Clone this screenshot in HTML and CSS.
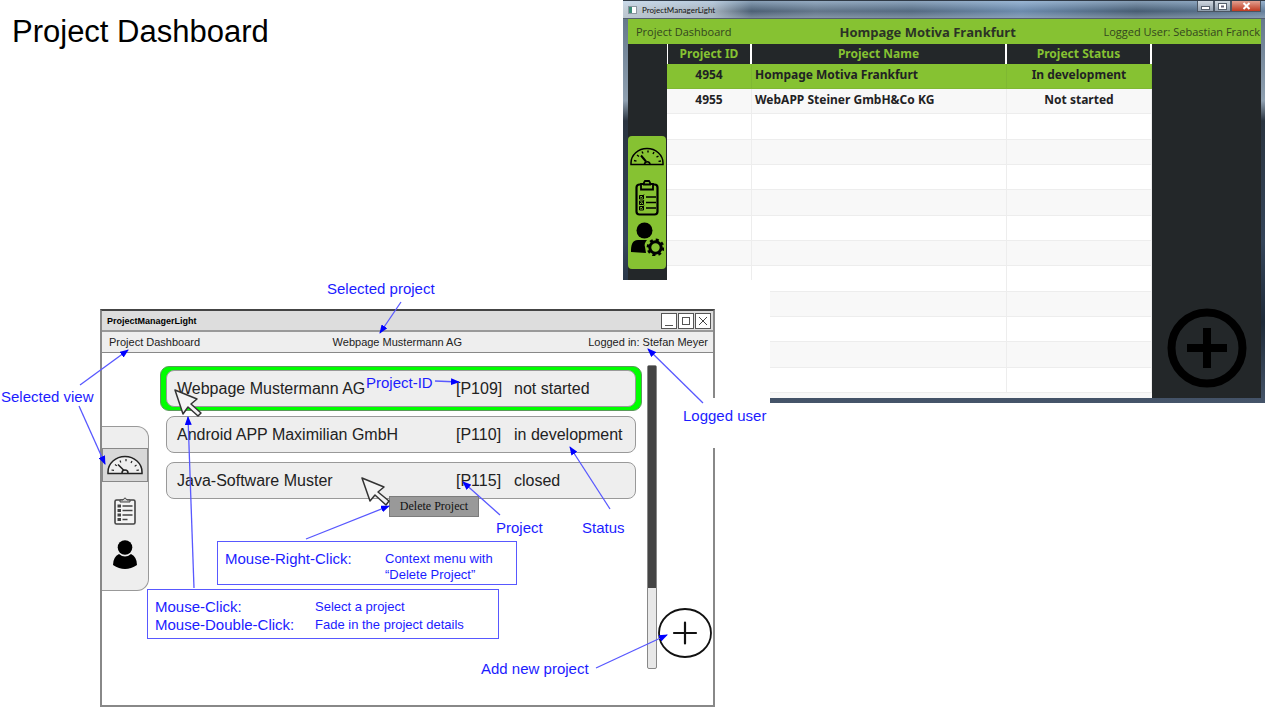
FILE: index.html
```html
<!DOCTYPE html>
<html lang="en">
<head>
<meta charset="utf-8">
<title>Project Dashboard</title>
<link rel="stylesheet" href="styles.css">
</head>
<body>
<main class="slide">
  <h1 class="slide-title">Project Dashboard</h1>

  <section class="app" aria-label="Application">
    <header class="app-titlebar">
      <span class="app-icon"></span>
      <span class="app-name">ProjectManagerLight</span>
      <div class="win-controls">
        <button class="win-btn" aria-label="Minimize"><svg width="9" height="7" viewBox="0 0 9 7"><rect x="0.5" y="3.5" width="8" height="3" fill="#fff" stroke="#56606c"/></svg></button>
        <button class="win-btn" aria-label="Maximize"><svg width="9" height="7" viewBox="0 0 9 7"><rect x="0.5" y="0.5" width="8" height="6" fill="#fff" stroke="#56606c"/><rect x="3" y="2.5" width="3" height="2" fill="#667"/></svg></button>
        <button class="win-btn win-close" aria-label="Close"><svg width="9" height="8" viewBox="0 0 9 8"><path d="M1.5 1l6 6M7.5 1l-6 6" stroke="#fff" stroke-width="2"/></svg></button>
      </div>
    </header>
    <div class="app-bar">
      <span class="app-view">Project Dashboard</span>
      <strong class="app-project">Hompage Motiva Frankfurt</strong>
      <span class="app-user">Logged User: Sebastian Franck</span>
    </div>
    <div class="app-main">
      <div class="app-side">
        <nav class="app-nav" aria-label="Views">
          <button class="nav-btn" aria-label="Dashboard">
            <svg width="34" height="19" viewBox="0 0 34 19"><path d="M1 17.500V16a16 14.500 0 0 1 32 0v1.500z" fill="none" stroke="#000" stroke-width="1.500"/><path d="M4 13.500l2.500.6M7 8l2 1.500M12 4.500l1 2M18 3.500v2M24 5l-1 2M28.500 9l-2 1.200M31 14l-2.500.4" stroke="#000" stroke-width="1.400"/><path d="M11 8.500l5 6" stroke="#000" stroke-width="2"/><path d="M14.500 17a2.800 2.800 0 0 1 5.500 0" fill="none" stroke="#000" stroke-width="1.700"/></svg>
          </button>
          <button class="nav-btn" aria-label="Tasks">
            <svg width="24" height="36" viewBox="0 0 24 36"><rect x="1.500" y="4.500" width="21" height="30" rx="3" fill="none" stroke="#000" stroke-width="2.200"/><path d="M6 4h3V2.500L10 1h4l1 1.500V4h3v5.500H6z" fill="#86c232" stroke="#000" stroke-width="1.800"/><path d="M8 3.500h8v2H8z" fill="#000"/><path d="M11 17h10M11 22.500h10M11 28h10" stroke="#000" stroke-width="1.300"/><path d="M4.500 15.500h4v3.500h-4zM4.500 21h4v3.500h-4zM4.500 26.500h4V30h-4z" fill="none" stroke="#000"/><path d="M5 16.500l1.500 1.500L9 14.500M5 22l1.500 1.500L9 20M5 27.500L6.500 29 9 25.500" fill="none" stroke="#000"/></svg>
          </button>
          <button class="nav-btn" aria-label="User settings">
            <svg width="34" height="34" viewBox="0 0 34 34"><circle cx="14.500" cy="8.500" r="8" /><path d="M1 30c0-7 1-12 7-12h9c-2 2-3 5-2 7l1 6z"/><g transform="translate(25.500 25.500)"><circle r="5.700" fill="none" stroke="#000" stroke-width="3"/><circle r="7.600" fill="none" stroke="#000" stroke-width="2.600" stroke-dasharray="3 2.970"/></g></svg>
          </button>
        </nav>
      </div>
      <div class="table-wrap">
        <table class="projects">
          <colgroup><col class="col-id"><col class="col-name"><col class="col-status"></colgroup>
          <thead><tr><th scope="col">Project ID</th><th scope="col">Project Name</th><th scope="col">Project Status</th></tr></thead>
          <tbody>
            <tr class="is-selected"><td>4954</td><td>Hompage Motiva Frankfurt</td><td>In development</td></tr>
            <tr><td>4955</td><td>WebAPP Steiner GmbH&amp;Co KG</td><td>Not started</td></tr>
            <tr><td></td><td></td><td></td></tr>
            <tr><td></td><td></td><td></td></tr>
            <tr><td></td><td></td><td></td></tr>
            <tr><td></td><td></td><td></td></tr>
            <tr><td></td><td></td><td></td></tr>
            <tr><td></td><td></td><td></td></tr>
            <tr><td></td><td></td><td></td></tr>
            <tr><td></td><td></td><td></td></tr>
            <tr><td></td><td></td><td></td></tr>
            <tr><td></td><td></td><td></td></tr>
            <tr><td></td><td></td><td></td></tr>
          </tbody>
        </table>
      </div>
      <div class="app-actions">
        <button class="app-add" aria-label="Add project">
          <svg width="80" height="80" viewBox="0 0 80 80"><circle cx="40" cy="40" r="35.500" fill="none" stroke="#000" stroke-width="8"/><path d="M20 40h40M40 20v40" stroke="#000" stroke-width="8"/></svg>
        </button>
      </div>
    </div>
  </section>

  <section class="sketch" aria-label="Annotated wireframe">
    <div class="mock">
      <header class="mock-titlebar">
        <span class="mock-name">ProjectManagerLight</span>
        <div class="mock-controls">
          <button class="mock-btn" aria-label="Minimize"><svg width="14" height="14" viewBox="0 0 14 14"><path d="M3 11.500h8" stroke="#555"/></svg></button>
          <button class="mock-btn" aria-label="Maximize"><svg width="14" height="14" viewBox="0 0 14 14"><rect x="3.500" y="3.500" width="7" height="7" fill="none" stroke="#555"/></svg></button>
          <button class="mock-btn" aria-label="Close"><svg width="14" height="14" viewBox="0 0 14 14"><path d="M3 3l8 8M11 3l-8 8" stroke="#444"/></svg></button>
        </div>
      </header>
      <div class="mock-bar">
        <span>Project Dashboard</span>
        <span>Webpage Mustermann AG</span>
        <span class="mock-user">Logged in: Stefan Meyer</span>
      </div>
      <div class="mock-main">
        <nav class="mock-nav" aria-label="Wireframe views">
          <button class="mock-view is-active" aria-label="Dashboard">
            <svg width="36" height="20" viewBox="0 0 36 20"><path d="M1 18.500V17a17 15.500 0 0 1 34 0v1.500z" fill="#eee" stroke="#222" stroke-width="1.500"/><path d="M4.500 15l2.500.4M8 9.500l1.800 1.400M13 5.500l.8 2M19 4v2.200M25 6l-1 2M29.500 10l-1.800 1.400M32 15l-2.500.4" stroke="#222" stroke-width="1.200"/><path d="M11 9.500l6 6" stroke="#222" stroke-width="1.600"/><path d="M15 18a3 3 0 0 1 6 0" fill="none" stroke="#222" stroke-width="1.500"/></svg>
          </button>
          <button class="mock-view" aria-label="Tasks">
            <svg width="22" height="28" viewBox="0 0 22 28"><rect x="1" y="3" width="20" height="24" rx="1.500" fill="#f4f4f4" stroke="#444" stroke-width="1.600"/><path d="M6 5V3h3q2-4 4 0h3v2z" fill="#ccc" stroke="#444"/><path d="M8.500 9h10M8.500 13.500h10M8.500 18h10M8.500 22.500h5" stroke="#444" stroke-width="1.400"/><path d="M3.500 9H7M3.500 13.500H7M3.500 18H7M3.500 22.500H7" stroke="#444" stroke-width="2.800"/></svg>
          </button>
          <button class="mock-view" aria-label="User">
            <svg width="24" height="29" viewBox="0 0 24 29"><circle cx="12" cy="7.500" r="7.300"/><path d="M6 14q6 5 12 0 6 3 6 11-12 8-24 0 0-8 6-11z"/></svg>
          </button>
        </nav>
        <ul class="mock-list">
          <li class="mock-item is-selected"><button class="mock-card"><span>Webpage Mustermann AG</span><span>[P109]</span><span>not started</span></button></li>
          <li class="mock-item"><button class="mock-card"><span>Android APP Maximilian GmbH</span><span>[P110]</span><span>in development</span></button></li>
          <li class="mock-item"><button class="mock-card"><span>Java-Software Muster</span><span>[P115]</span><span>closed</span></button></li>
        </ul>
        <div class="mock-scroll"><div class="mock-thumb"></div></div>
        <button class="mock-add" aria-label="Add new project">
          <svg width="54" height="50" viewBox="0 0 54 50"><ellipse cx="27" cy="25" rx="26" ry="24" fill="#fff" stroke="#111" stroke-width="1.800"/><path d="M16 25h22M27 14.500v21" stroke="#111" stroke-width="2.200" stroke-linecap="round"/></svg>
        </button>
      </div>
    </div>

    <button class="context-menu">Delete Project</button>

    <dl class="note note-right-click">
      <dt>Mouse-Right-Click:</dt><dd>Context menu with<br>“Delete Project”</dd>
    </dl>
    <dl class="note note-click">
      <dt>Mouse-Click:</dt><dd>Select a project</dd>
      <dt>Mouse-Double-Click:</dt><dd>Fade in the project details</dd>
    </dl>

    <span class="label label-project">Selected project</span>
    <span class="label label-view">Selected view</span>
    <span class="label label-id">Project-ID</span>
    <span class="label label-user">Logged user</span>
    <span class="label label-item">Project</span>
    <span class="label label-status">Status</span>
    <span class="label label-add">Add new project</span>

    <svg class="arrows" width="770" height="430" viewBox="0 280 770 430" aria-hidden="true">
      <defs>
        <marker id="head" markerUnits="userSpaceOnUse" markerWidth="9" markerHeight="7" refX="8" refY="3.500" orient="auto"><path d="M0 0l9 3.500L0 7z" fill="#00f"/></marker>
      </defs>
      <g fill="#f4f4f4" stroke="#333" stroke-width="1.500" stroke-linejoin="round">
        <path d="M175 390l22 9-6 5 10 9-3 3-10-9-5 7z"/>
        <path d="M362 478l22 9-6 5 11 9-3 4-11-10-5 6z"/>
      </g>
      <g stroke="#5858ff" stroke-width="1.300">
        <path marker-end="url(#head)" d="M401 302L380 333"/>
        <path marker-end="url(#head)" d="M80 385L128 350"/>
        <path marker-end="url(#head)" d="M79 406L105 464"/>
        <path marker-end="url(#head)" d="M435 381L459 382"/>
        <path marker-end="url(#head)" d="M703 403L648 349"/>
        <path marker-end="url(#head)" d="M194 588L188 417"/>
        <path marker-end="url(#head)" d="M306 539L389 506"/>
        <path marker-end="url(#head)" d="M500 515L463 482"/>
        <path marker-end="url(#head)" d="M610 509L570 447"/>
        <path marker-end="url(#head)" d="M596 668L667 635"/>
      </g>
    </svg>
  </section>
</main>
</body>
</html>
```
FILE: styles.css
```css
* { box-sizing: border-box; }
body { margin: 0; background: #fff; font-family: "Liberation Sans", Arial, sans-serif; color: #000; }
button { margin: 0; padding: 0; border: 0; background: none; font: inherit; color: inherit; cursor: pointer; }
svg { display: block; }

.slide { position: relative; min-height: 710px; overflow: hidden; }
.slide-title { margin: 0; padding: 14px 12px; font-size: 31px; line-height: 36px; font-weight: 400; }

/* Application window */
.app {
  position: absolute; top: 0; left: 623px; right: 0;
  padding: 0 4px 5px 5px;
  font-family: "Noto Sans", "Open Sans", sans-serif;
  background: linear-gradient(#5c6f84, #8fa0b0 25%, #2a3440 30%, #35455a 60%, #1e2a38 80%, #46556a);
}
.app-titlebar {
  display: flex; align-items: center; gap: 5px; height: 19px; margin: 0 -4px 0 -5px; padding-left: 5px;
  border-top: 1px solid #303a46; border-bottom: 1px solid #55606c;
  background: linear-gradient(rgba(190,215,240,.5), rgba(30,45,65,.1) 60%, rgba(160,175,190,.5)),
    linear-gradient(90deg, #d5dde4, #b4c0cb 14%, #52667a 20%, #6b7e92 30%, #5b7188 45%, #7595b8 62%, #4c6278 80%, #6d89a6);
}
.app-icon { width: 9px; height: 8px; border: 1px solid #8a959f; background: linear-gradient(90deg, #3c8c78 40%, #fff 40%); }
.app-name { flex: 1; font-family: Lato, "Noto Sans", sans-serif; font-size: 8px; line-height: 12px; color: #111; }
.win-controls { display: flex; align-self: flex-start; margin-right: 4px; }
.win-btn { display: grid; place-items: center; width: 17px; height: 11px; border: 1px solid #4a5562; border-top: 0; background: linear-gradient(#d0d8e0, #8f9dac); }
.win-close { width: 30px; background: linear-gradient(#e2a090, #c03a20); }
.app-bar {
  display: grid; grid-template-columns: 10fr auto 12fr; align-items: center; height: 25px; padding: 0 1px 0 8px;
  background: #86c232; color: #33461e; font-family: "Open Sans", "Noto Sans", sans-serif; font-size: 11px;
}
.app-project { font-size: 13px; color: #2b3326; }
.app-user { justify-self: end; }
.app-main { display: flex; height: 354px; background: #232729; }
.app-side { width: 39px; padding-top: 92px; }
.app-nav { display: flex; flex-direction: column; align-items: center; width: 38px; padding: 11px 0 13px; border-radius: 4px; background: #86c232; }
.nav-btn + .nav-btn { margin-top: 14px; }
.nav-btn:last-child { margin-top: 6px; }

.table-wrap { flex: 1; background: #f8f8f8; }
.projects { width: 100%; table-layout: fixed; border-collapse: separate; border-spacing: 0; font-size: 12px; line-height: 16px; font-weight: 700; color: #1f2224; }
.col-id { width: 85px; }
.col-status { width: 145px; }
.projects th { height: 20px; padding: 0; background: #232729; color: #86c232; border-right: 2px solid #fff; }
.projects th:first-child { border-left: 1px solid #fff; }
.projects td { height: 25px; padding: 0 0 2px; text-align: center; background: #fff; border-right: 1px solid #ededed; border-bottom: 1px solid #ededed; }
.projects tr:nth-child(3n) td { height: 26px; }
.projects td:nth-child(2) { padding-left: 3px; text-align: left; }
.projects tr:nth-child(even) td { background: #f8f8f8; }
.projects .is-selected td { background: #86c232; border-color: #7fb832; }
.app-actions { display: flex; align-items: flex-end; justify-content: center; width: 109px; padding-bottom: 10px; }

/* Wireframe */
.sketch { position: absolute; top: 280px; left: 0; width: 770px; height: 430px; background: #fff; }
.mock { position: absolute; top: 29px; left: 100px; width: 615px; border: 2px solid #888; border-top-color: #444; background: #fff; }
.mock-titlebar { display: flex; align-items: center; justify-content: space-between; height: 21px; padding: 0 2px 0 5px; border-bottom: 2px solid #999; background: #ddd; }
.mock-name { font-size: 9px; font-weight: 700; }
.mock-controls { display: flex; gap: 1px; }
.mock-btn { width: 16px; height: 16px; border: 1px solid #555; background: #fff; }
.mock-bar { display: grid; grid-template-columns: 10fr auto 11fr; align-items: center; height: 21px; padding: 0 5px 0 7px; border-bottom: 1px solid #888; background: #eee; font-size: 11px; color: #222; }
.mock-user { justify-self: end; }
.mock-main { display: flex; align-items: flex-start; height: 352px; padding-top: 12px; }
.mock-nav { display: flex; flex-direction: column; align-items: center; width: 47px; height: 165px; margin: 61px 11px 0 0; padding-top: 21px; border: 1px solid #999; border-left: 0; border-radius: 0 12px 12px 0; background: #eee; }
.mock-view { display: grid; place-items: center; width: 46px; height: 34px; margin-bottom: 12px; }
.mock-view:last-child { margin-bottom: 0; height: 29px; }
.mock-view.is-active { border: 1px solid #888; background: #d8d8d8; }
.mock-list { flex: 1; display: flex; flex-direction: column; gap: 1px; margin: 1px 5px 0 0; padding: 0; list-style: none; }
.mock-item { padding: 3px 5px; border: 1px solid transparent; border-radius: 9px; }
.mock-item.is-selected { background: #0f0; border-color: #5a9a5a; }
.mock-card { display: grid; grid-template-columns: 1fr 58px 121px; align-items: center; width: 100%; height: 37px; padding-left: 10px; border: 1px solid #999; border-radius: 8px; background: #eee; font-size: 16px; text-align: left; color: #222; }
.mock-scroll { width: 10px; height: 304px; margin-right: 1px; border: 1px solid #888; border-radius: 2px; background: #e8e8e8; }
.mock-thumb { height: 222px; background: #444; }
.mock-add { margin: 243px 1px 0 0; }

.context-menu { position: absolute; top: 216px; left: 389px; width: 90px; height: 21px; border: 1px solid #7c7c7c; background: #999; font: 12px "Liberation Serif", serif; color: #111; }

.note { position: absolute; display: grid; grid-template-columns: 160px 1fr; margin: 0; padding: 8px 7px 4px; border: 1px solid #5858ff; background: #fff; color: #1c1cff; }
.note dt { font-size: 15px; line-height: 18px; }
.note dd { margin: 0; font-size: 13px; line-height: 18px; }
.note-right-click { top: 261px; left: 217px; width: 300px; height: 44px; }
.note-right-click dd { line-height: 16px; padding-top: 1px; }
.note-click { top: 309px; left: 147px; width: 352px; }

.label { position: absolute; font-size: 15px; line-height: 18px; color: #1c1cff; white-space: nowrap; }
.label-project { top: 0; left: 327px; }
.label-view { top: 108px; left: 1px; }
.label-id { top: 94px; left: 366px; }
.label-user { top: 118px; left: 683px; padding: 9px 0 23px; background: #fff; }
.label-item { top: 239px; left: 496px; }
.label-status { top: 239px; left: 582px; }
.label-add { top: 380px; left: 481px; }
.arrows { position: absolute; top: 0; left: 0; pointer-events: none; }
```
